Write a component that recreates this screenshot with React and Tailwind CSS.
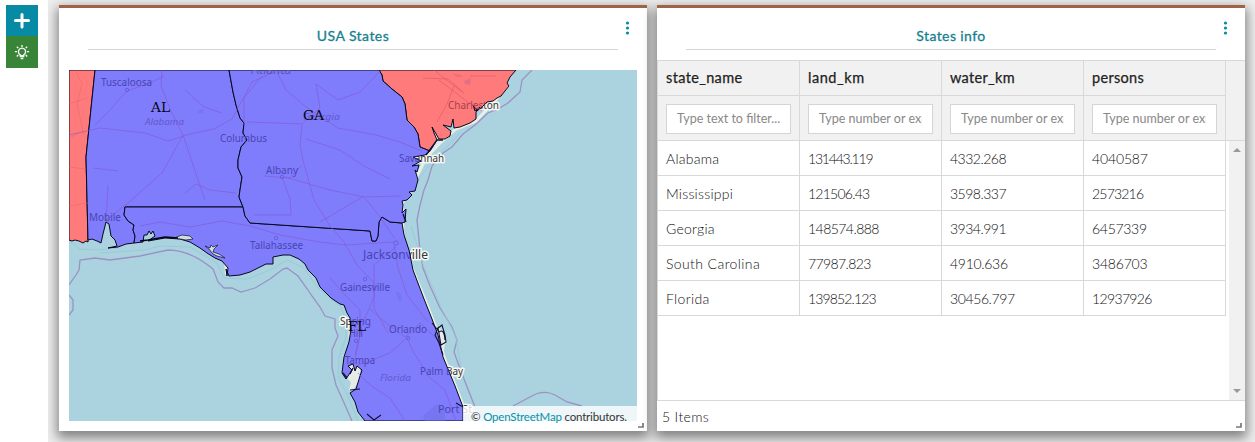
import React from "react";

const columns = [
  ["state_name", "tracking-[0.35px]"],
  ["land_km", "tracking-[0.55px]"],
  ["water_km", "tracking-[0.3px]"],
  ["persons", "tracking-[0.3px]"],
];

const rows = [
  [["Alabama", "tracking-[0.25px]"], ["131443.119", "tracking-[-1.2px]"], ["4332.268", "tracking-[-0.5px]"], ["4040587", "tracking-[-0.15px]"]],
  [["Mississippi", "tracking-[0.25px]"], ["121506.43", "tracking-[-0.75px]"], ["3598.337", "tracking-[-0.5px]"], ["2573216", "tracking-[-0.8px]"]],
  [["Georgia", "tracking-[0.25px]"], ["148574.888", "tracking-[-0.55px]"], ["3934.991", "tracking-[-0.5px]"], ["6457339", "tracking-[-0.3px]"]],
  [["South Carolina", "tracking-[0.4px]"], ["77987.823", "tracking-[-0.6px]"], ["4910.636", "tracking-[-0.3px]"], ["3486703", "tracking-[-0.2px]"]],
  [["Florida", "tracking-[0.35px]"], ["139852.123", "tracking-[-0.85px]"], ["30456.797", "tracking-[-0.4px]"], ["12937926", "tracking-[-0.65px]"]],
];

const MS = "M69 70H95L86 157L88 242L86 241L83 243L79 241L75 240L72 241L69 240Z";
const AL =
  "M95 70H229L233 92L236 105L240 118L244 123L243 133L247 140L241 147L238 160L238 168L242 177L240 190L239 197L243 207H125L124 215L128 221L134 225L133 230L135 236L134 243L126 244L118 247L108 248L117 246L115 240L111 236L109 224L106 222L103 234L101 243L97 241L92 239L88 240L86 157Z";
const GA =
  "M229 70H379L382 75L383 81L392 89L402 97L405 104L407 120L414 127L418 134L420 147L430 151L425 155L413 157L421 161L412 166L419 165L417 172L415 170L418 180L415 191L409 192L412 195L407 200L402 201L403 205L402 213L406 209L405 222L402 223L390 222L382 217L379 222L378 236L376 241L372 241L370 231L250 223L245 216L243 207L239 197L240 190L242 177L238 168L238 160L241 147L247 140L243 133L244 123L240 118L236 105L233 92Z";
const SC =
  "M379 70H516L510 77L507 83L509 86L505 91L501 96L497 98L493 101L487 102L482 107L477 111L473 105L475 111L480 107L476 112L476 119L470 123L460 127L454 128L453 119L451 127L443 125L451 131L450 136L445 139L439 139L432 127L434 133L437 140L430 151L420 147L418 134L414 127L407 120L405 104L402 97L392 89L383 81L382 75Z";
const FL =
  "M125 207H243L245 216L250 223L370 231L372 241L376 241L378 236L379 222L382 217L390 222L402 223L404 235L409 250L413 270L424 299L432 319L438 335L443 357L455 386L463 407V421H365L358 412L355 402L350 393L356 389L360 376L362 370L357 366L355 371L353 364L348 366L352 370L346 379L342 373L344 357L349 342L351 330L350 318L347 313L344 305L340 304L331 298L320 287L316 278L308 270L305 264L299 259L290 255L283 255L273 257L273 264L266 264L260 267L250 272L240 275L229 276L226 269L227 276L228 268L222 261L215 258L207 253L200 248L190 242L180 239L165 238L148 241L155 236L153 231L151 234L149 231L147 235L144 235L143 242L134 243L135 236L133 230L134 225L128 221L124 215Z";

const roads = [
  "M95 125L108 112L127 91L150 83L164 76M162 70L161 86L171 111L183 135L162 173L128 203L106 220",
  "M69 135L100 128L145 133L168 141L190 134L214 129L232 119L252 82L274 72M183 135L198 180L205 200",
  "M185 90L204 107L222 113M185 193L196 184L210 190L236 193",
  "M276 70L286 90L306 107L338 128L376 135L400 142L422 151",
  "M262 76L244 98L244 125M247 122L302 124L320 108L316 84L338 100L360 92L380 71",
  "M302 125L300 145L303 160L314 200L330 226L344 242L357 265L374 283L374 308L388 333",
  "M282 177L290 199L291 214M285 177L330 190L364 197L400 196M364 196L320 222M365 198L380 217L395 239",
  "M302 165L290 178L264 176M254 215L292 215M306 139L340 150L364 166L390 179",
  "M108 185L106 222M93 168L118 171M140 226L160 222L190 227L222 221L250 226L280 235L320 242L345 245L394 242",
  "M394 245L398 268L407 295L428 322M396 247L374 265L374 297L362 325L355 360",
  "M370 309L386 323L405 337L420 323L440 342M356 366L390 353L407 338L414 353L430 378L445 390L456 421",
  "M358 373L370 385L390 398L405 421M355 355L360 335L360 310L345 295L330 278",
];
const carolinaRoads =
  "M439 80L465 100L482 111M454 86L447 104L437 122M423 78L448 79L464 93M470 76L496 76M434 70L462 92";

const labels = [
  ["Tuscaloosa", 101, 86, 51],
  ["Columbus", 220, 142, 47],
  ["Albany", 266, 173.5, 32],
  ["Mobile", 89, 220.5, 32],
  ["Tallahassee", 250, 249, 53],
  ["Gainesville", 340, 291, 50],
  ["Orlando", 389, 333, 38],
  ["Tampa", 345, 363.5, 30],
  ["Palm Bay", 420, 375, 43],
  ["Port St.", 438, 413, 37],
  ["Savannah", 399, 162, 45],
  ["Charleston", 448, 108.5, 51],
  ["Spring", 340, 325, 31],
  ["Hill", 349, 337, 14],
];

const Labels = ({ halo, color }) => (
  <g fontFamily="'Noto Sans', sans-serif" fontSize="10" fill={color} stroke={halo ? "#f4f7f2" : "none"} strokeWidth={halo ? 3 : 0} strokeLinejoin="round" paintOrder="stroke">
    {labels.map(([t, x, y, w]) => (
      <text key={t} x={x} y={y} textLength={w} lengthAdjust="spacingAndGlyphs">{t}</text>
    ))}
    <text x="363" y="259" fontSize="12" textLength="65" lengthAdjust="spacingAndGlyphs">Jacksonville</text>
  </g>
);

function StatesMap() {
  return (
    <svg viewBox="69 70 568 351" width="568" height="351" className="block">
      <rect x="69" y="70" width="568" height="351" fill="#aad3df" />
      <path d="M402 201L403 235L412 268L424 297L438 333L444 357L463 405M401 203L408 197L417 176L426 158L439 144L456 129L476 121L492 104L509 85" fill="none" stroke="#e9efe7" strokeWidth="3" strokeLinejoin="round" />
      <path d="M344 376L351 365L360 367L360 380L352 391L349 390L351 382ZM436 325L443 331L446 340L443 354ZM431 126L436 127L441 140L434 147ZM224 261L229 263L229 276L225 274Z" fill="#e6ebe5" />
      <path d="M69 285L76 275L79 270L80 260L95 258L110 260L140 256L168 250Q190 250 213 269L218 282L224 288L232 288L241 292L255 288L270 279L283 269L287 268L298 276L308 290L312 296L320 307L325 316L335 319L335 328L338 336L332 350L332 368L336 385L345 405L352 421M69 295L73 300L73 310L69 315M532 70L522 80L520 92L508 103L498 109L488 113L475 125L463 134L452 147L443 153L432 166L428 180L424 190L420 205L417 220L420 250L423 268L430 286L440 308L452 327L457 340L454 352L462 374L475 407M513 406L530 397Q543 389 555 395L567 402L582 406" fill="none" stroke="#9b92c4" strokeWidth="1.3" />
      <path d="M69 241L80 249L97 250L119 248M100 253L145 250L160 246L190 247L217 263L224 278L247 279L270 270L287 260L304 268L318 288L341 307L346 320L346 337L339 357L338 377L347 394L358 421M411 226L423 265L440 305L456 337L463 380M418 180L432 162L460 133" fill="none" stroke="#98c6d5" strokeWidth=".8" />
      <Labels halo color="#34343c" />
      <g stroke="#070720" strokeWidth="1" strokeLinejoin="round">
        <path d={MS} fill="#ff7b7b" />
        <path d={SC} fill="#ff7b7b" />
        <path d={AL} fill="#7f7dfc" />
        <path d={FL} fill="#7f7dfc" />
        <path d={GA} fill="#7f7dfc" />
      </g>
      <path d="M396 293a2.5 5 -20 1 1 3 8zM199 110l5-1-1 4-5 0zM423 416l14-12 8 6v11h-20z" fill="#6d70e8" opacity=".5" />
      <path d="M452 73l8 2 4 2-7 0zM464 81l7-3-1 7-5-1z" fill="#ca688c" opacity=".5" />
      {roads.map((d, i) => (
        <path key={i} d={d} fill="none" stroke="#8658d2" strokeWidth=".9" opacity=".7" />
      ))}
      <path d={carolinaRoads} fill="none" stroke="#e05a6c" strokeWidth=".9" opacity=".75" />
      <path d="M69 104L87 98M69 138L84 131M75 70L82 84L77 104L84 135M69 167L86 169M69 206L88 203" fill="none" stroke="#e56170" strokeWidth=".7" opacity=".7" />
      <g fill="none" stroke="#605bd5" strokeWidth=".8">
        <circle cx="127" cy="90" r="1.7" />
        <circle cx="282" cy="177" r="1.7" />
        <circle cx="276" cy="238" r="1.7" />
        <circle cx="396" cy="243" r="2.2" />
        <circle cx="365" cy="279" r="1.7" />
        <circle cx="408" cy="338" r="1.7" />
        <circle cx="356" cy="341" r="1.7" />
      </g>
      <path d="M174 238L182 235L190 236L193 239L186 240ZM205 246L210 248L211 245L213 247L218 245L214 249L213 252L219 254L225 258L217 256L213 254L209 249Z" fill="#cfdfe2" stroke="#101026" strokeWidth=".7" />
      <path d="M140 241L148 240L165 237L178 238" fill="none" stroke="#050510" strokeWidth="1.7" />
      <path d="M432 323L437 329L442 325L445 335L446 342L441 345L438 328L435 335L440 345M439 332Q444 328 445 340M438 340L443 355M456 403L463 407M350 390L360 389M367 414L374 420L381 415" fill="none" stroke="#101035" strokeWidth="1.1" />
      <path d="M350 374L353 368M343 373L347 378M403 214L406 222M426 155L437 140L443 140" fill="none" stroke="#101035" strokeWidth="1.3" />
      <clipPath id="inland">
        <path d={AL} /><path d={FL} /><path d={GA} />
      </clipPath>
      <clipPath id="carolina"><path d={SC} /></clipPath>
      <g clipPath="url(#inland)"><Labels color="#4a44b4" /></g>
      <g clipPath="url(#carolina)"><Labels color="#a54150" /></g>
      <g fontFamily="'Noto Sans', sans-serif" fontSize="9.5" fontStyle="italic" fill="#6259ce">
        <text x="145" y="125" textLength="39" lengthAdjust="spacingAndGlyphs">Alabama</text>
        <text x="303" y="120" textLength="37" lengthAdjust="spacingAndGlyphs">Georgia</text>
        <text x="380" y="381" textLength="31" lengthAdjust="spacingAndGlyphs">Florida</text>
      </g>
      <text x="251" y="73.5" fontFamily="'Noto Sans', sans-serif" fontSize="12" fill="#5b56b6" textLength="40" lengthAdjust="spacingAndGlyphs">Atlanta</text>
      <g fontFamily="'DejaVu Serif', serif" fontSize="13.5" fill="#050510">
        <text x="151" y="112" textLength="19" lengthAdjust="spacingAndGlyphs">AL</text>
        <text x="303" y="120" textLength="21" lengthAdjust="spacingAndGlyphs">GA</text>
        <text x="348" y="330.5" textLength="18" lengthAdjust="spacingAndGlyphs">FL</text>
      </g>
    </svg>
  );
}

function Header({ title, tracking }) {
  return (
    <div className="flex h-[52px] shrink-0">
      <div className="ml-[29px] mt-3 flex h-[30px] flex-1 items-center justify-center border-b border-[#d5d5d5]">
        <h2 className={`mt-[2px] text-[14px] font-normal leading-5 text-[#16808f] [-webkit-text-stroke:0.3px_#16808f] ${tracking}`}>{title}</h2>
      </div>
      <button aria-label="Menu" className="flex w-[29px] justify-center pr-[10px] pt-[13px]">
        <svg width="5" height="14" viewBox="0 0 5 14" fill="#078aa3">
          <circle cx="2.5" cy="2" r="1.6" /><circle cx="2.5" cy="7" r="1.6" /><circle cx="2.5" cy="12" r="1.6" />
        </svg>
      </button>
    </div>
  );
}

const Resize = () => (
  <svg width="6" height="6" viewBox="0 0 6 6" className="absolute bottom-[3px] right-[3px]">
    <path d="M5 1V5H0" fill="none" stroke="#777" strokeWidth="1.7" />
  </svg>
);

const panel =
  "relative flex h-[426px] w-[588px] shrink-0 flex-col border-t-[3px] border-[#9f6346] bg-white shadow-[0_5px_11px_2px_rgba(0,0,0,0.46)]";

export default function App() {
  return (
    <div className="flex h-[442px] w-[1255px] overflow-hidden bg-[#eeeeee] font-['Lato',sans-serif]">
      <aside className="z-10 flex w-12 shrink-0 flex-col items-start bg-white pl-[6px] pt-[5px]">
        <button aria-label="Add widget" className="flex h-[31px] w-8 items-center justify-center bg-[#078aa3]">
          <svg width="16" height="16" viewBox="0 0 16 16"><path d="M8 1.5V14M1.5 7.5H14.5" stroke="white" strokeWidth="3" strokeLinecap="round" /></svg>
        </button>
        <button aria-label="Tips" className="flex h-8 w-8 items-center justify-center bg-[#388538]">
          <svg width="16" height="17" viewBox="0 0 18 18" fill="none" stroke="white" strokeWidth="1.5">
            <path d="M7 12.6V11.5A4 4 0 1 1 11 11.5V12.6Z" />
            <path d="M6.5 13.5H11.5M7.5 15.8H10.5" strokeWidth="1.8" />
            <path d="M9 .6V2.8M1 8H3.4M14.6 8H17M3.2 2.5L4.8 4.1M14.8 2.5L13.2 4.1M3.2 13.5L4.8 11.9M14.8 13.5L13.2 11.9" />
          </svg>
        </button>
      </aside>
      <main className="flex flex-1 gap-[10px] pl-[11px] pt-[5px]">
        <section className={panel}>
          <Header title="USA States" tracking="tracking-[0.45px]" />
          <div className="px-[10px] pt-[10px]">
            <div className="grid">
              <div className="col-start-1 row-start-1"><StatesMap /></div>
              <div className="z-10 col-start-1 row-start-1 flex h-[15px] w-[174px] items-center self-end justify-self-end whitespace-nowrap bg-white/80 pl-2 pt-[5px] text-[11.5px] leading-[15px] tracking-[-0.18px] text-[#333]">
                <span>© <a className="text-[#0791aa]">OpenStreetMap</a> contributors.</span>
              </div>
            </div>
          </div>
          <Resize />
        </section>
        <section className={panel}>
          <Header title="States info" tracking="tracking-[0.4px]" />
          <div className="flex h-20 shrink-0 border-t border-[#d8d8d8] bg-[#f1f1f1]">
            {columns.map(([name, tracking], i) => (
              <div key={name} className={i === 0 ? "w-[143px] border-x border-[#dadada]" : "w-[142px] border-r border-[#dadada]"}>
                <div className={`flex h-[35px] items-center border-b border-[#d8d8d8] pl-2 text-[14.5px] text-[#222] [-webkit-text-stroke:0.25px_#222] ${tracking}`}>{name}</div>
                <div className="flex h-11 px-2 pt-2">
                  <div className="flex h-[30px] w-[125px] items-center border border-[#d5d5d5] bg-white px-[10px]">
                    <span className="overflow-hidden whitespace-nowrap text-[12.5px] leading-5 text-[#888]">
                      {i === 0 ? "Type text to filter..." : "Type number or expression..."}
                    </span>
                  </div>
                </div>
              </div>
            ))}
          </div>
          <div className="flex h-[261px] shrink-0 border-y border-l border-[#d8d8d8]">
            <div className="flex-1">
              {rows.map((row) => (
                <div key={row[0][0]} className="flex w-[568px] border-b border-[#d8d8d8]">
                  {row.map(([value, tracking]) => (
                    <div key={value} className={`h-[34px] w-[142px] border-r border-[#d8d8d8] pl-2 pt-2 text-[14px] font-light leading-5 text-[#111] ${tracking}`}>{value}</div>
                  ))}
                </div>
              ))}
            </div>
            <div className="flex w-4 flex-col items-center justify-between bg-[#f1f1f1] py-[6px]">
              <svg width="8" height="5"><path d="M0 5L4 1L8 5Z" fill="#999" /></svg>
              <svg width="8" height="5"><path d="M0 0H8L4 4Z" fill="#999" /></svg>
            </div>
          </div>
          <div className="flex flex-1 items-center pl-[5px] text-[14px] font-light tracking-[0.35px] text-[#111]">5 Items</div>
          <Resize />
        </section>
      </main>
    </div>
  );
}
